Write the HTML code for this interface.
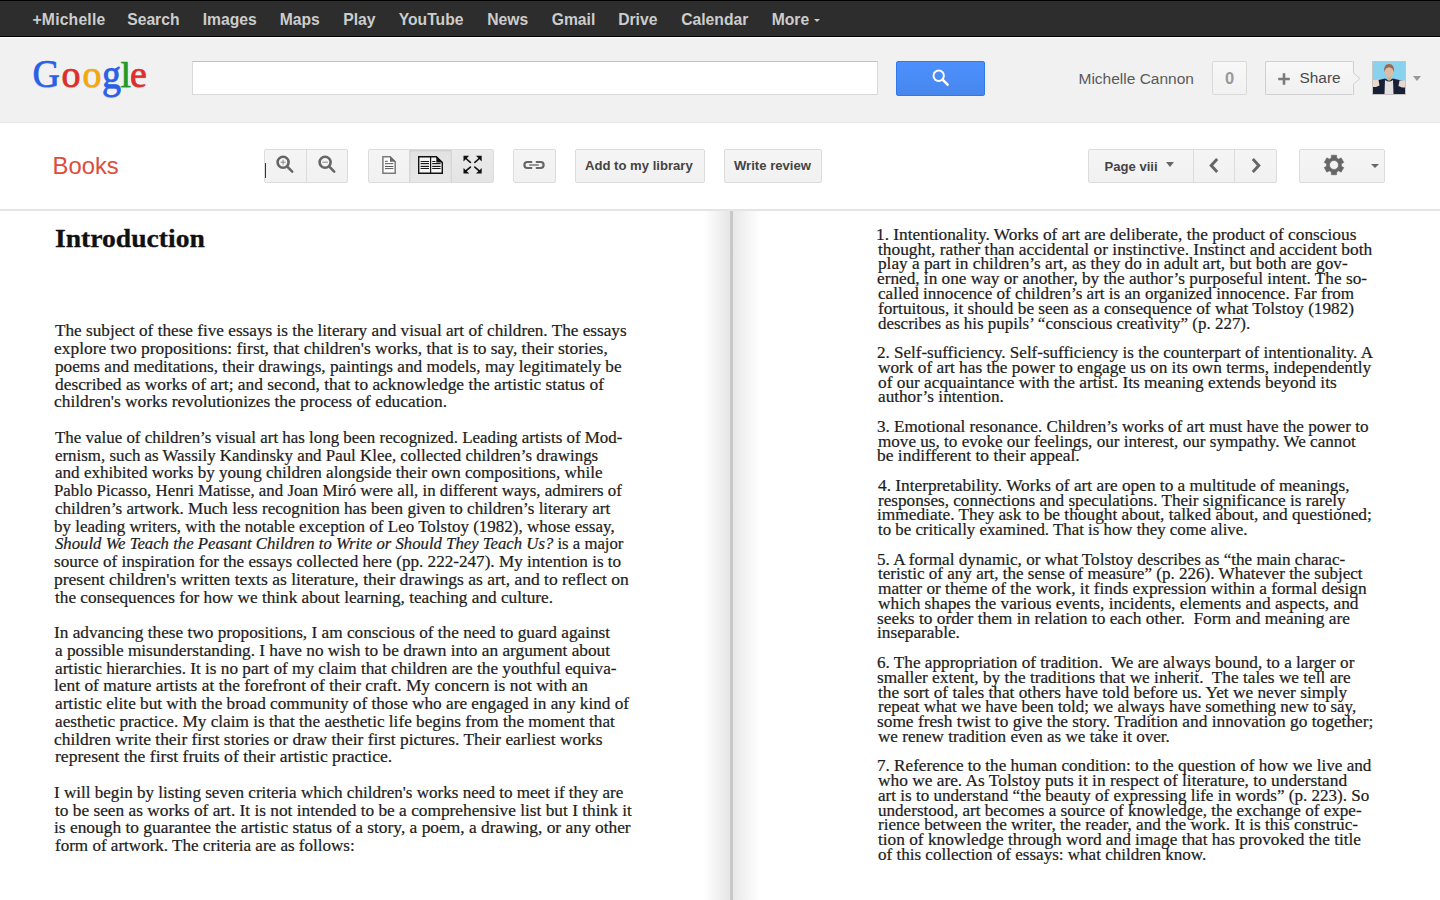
<!DOCTYPE html>
<html><head><meta charset="utf-8">
<style>
*{box-sizing:border-box}
html,body{margin:0;padding:0;width:1440px;height:900px;overflow:hidden;background:#fff;font-family:"Liberation Sans",sans-serif}
.a{position:absolute}
#topbar{left:0;top:0;width:1440px;height:37px;background:linear-gradient(#303030 0,#303030 1px,#2d2d2d 1px,#2d2d2d 34px,#303030 34px);border-top:1px solid #000;border-bottom:1px solid #000}
#topbar .n{position:absolute;top:9.5px;font:bold 15.7px/18px "Liberation Sans",sans-serif;color:#ccc;white-space:nowrap}
#hdr{left:0;top:37px;width:1440px;height:86px;background:#f1f1f1;border-top:1px solid #fff;border-bottom:1px solid #e5e5e5}
#tb{left:0;top:123px;width:1440px;height:88px;background:#fff;border-bottom:2px solid #e4e4e4}
.btn{position:absolute;top:149px;height:34px;border:1px solid #dcdcdc;border-radius:2px;background:linear-gradient(#f5f5f5,#f1f1f1);}
.btxt{position:absolute;font:bold 13.1px/16px "Liberation Sans",sans-serif;color:#444;white-space:nowrap}
.seg{position:absolute;top:0;height:32px;border-left:1px solid #dcdcdc}
.bl{position:absolute;white-space:pre;font-family:"Liberation Serif",serif;line-height:1;color:#1c1c1c;-webkit-text-stroke:0.2px #1c1c1c;transform-origin:0 0}
</style></head><body>

<div id="topbar" class="a">
  <span class="n" style="left:32.5px;letter-spacing:0.2px">+Michelle</span>
  <span class="n" style="left:127.2px">Search</span>
  <span class="n" style="left:202.7px">Images</span>
  <span class="n" style="left:279.7px">Maps</span>
  <span class="n" style="left:343.2px">Play</span>
  <span class="n" style="left:398.7px">YouTube</span>
  <span class="n" style="left:487.2px">News</span>
  <span class="n" style="left:551.7px">Gmail</span>
  <span class="n" style="left:618.2px">Drive</span>
  <span class="n" style="left:681.2px">Calendar</span>
  <span class="n" style="left:771.7px">More</span>
  <div class="a" style="left:814px;top:18px;width:0;height:0;border-left:3px solid transparent;border-right:3px solid transparent;border-top:3px solid #ccc"></div>
</div>

<div id="hdr" class="a"></div>
<!-- Google logo -->
<div class="a" style="left:0;top:0;font:38px/1 'Liberation Serif',serif;white-space:nowrap;text-shadow:0 1px 1px rgba(0,0,0,.2)">
<span class="a" id="lg0" style="left:32.5px;top:54.5px;color:#2a5fe8;-webkit-text-stroke:0.6px #2a5fe8;transform:scaleY(1.045);transform-origin:0 33px">G</span>
<span class="a" id="lg1" style="left:61.5px;top:54.5px;color:#dd2e2c;-webkit-text-stroke:0.7px #dd2e2c">o</span>
<span class="a" id="lg2" style="left:82.5px;top:54.5px;color:#f3a90d;-webkit-text-stroke:0.7px #f3a90d">o</span>
<span class="a" id="lg3" style="left:102px;top:54.5px;color:#2a5fe8;-webkit-text-stroke:0.7px #2a5fe8;transform:scaleY(1.09);transform-origin:0 17px">g</span>
<span class="a" id="lg4" style="left:120.5px;top:54.5px;color:#1e9a2a;-webkit-text-stroke:0.7px #1e9a2a;transform:scaleY(0.955);transform-origin:0 33.5px">l</span>
<span class="a" id="lg5" style="left:130px;top:54.5px;color:#dd2e2c;-webkit-text-stroke:0.7px #dd2e2c">e</span>
</div>
<!-- search box -->
<div class="a" style="left:192px;top:61px;width:686px;height:34px;background:#fff;border:1px solid #d9d9d9;border-top-color:#c0c0c0"></div>
<div class="a" style="left:896px;top:61px;width:89px;height:35px;border:1px solid #3079ed;border-radius:2px;background:linear-gradient(#4d90fe,#4787ed)"></div>
<svg class="a" style="left:930px;top:67px" width="22" height="22" viewBox="0 0 22 22"><circle cx="8.7" cy="8.75" r="5.2" fill="none" stroke="#fff" stroke-width="2"/><path d="M12.6 12.6L17.6 17.6" stroke="#fff" stroke-width="2.6" stroke-linecap="round"/></svg>

<div class="a" style="left:1078.5px;top:70.8px;font:15.5px/16px 'Liberation Sans',sans-serif;color:#5a5a5a;white-space:nowrap">Michelle Cannon</div>
<div class="a" style="left:1212px;top:61px;width:35px;height:34px;border:1px solid #d9d9d9;border-radius:2px;background:linear-gradient(#f8f8f8,#f1f1f1);font:bold 16.5px/33px 'Liberation Sans',sans-serif;color:#999;text-align:center">0</div>
<div class="a" style="left:1265px;top:61px;width:89px;height:34px;border:1px solid #d0d0d0;border-right:none;border-radius:2px 0 0 2px;background:linear-gradient(#f8f8f8,#f0f0f0)"></div>
<svg class="a" style="left:1352px;top:61px" width="10" height="34" viewBox="0 0 10 34"><path d="M0 0.5H1.5V12L8 17.5L1.5 23V33.5H0Z" fill="#f3f3f3"/><path d="M1.5 0V12L8 17.5L1.5 23V34" fill="none" stroke="#d0d0d0" stroke-width="1"/></svg>
<svg class="a" style="left:1277px;top:72px" width="14" height="14" viewBox="0 0 14 14"><path d="M7 1.2V12.8M1.2 7H12.8" stroke="#7a7a7a" stroke-width="2.6"/></svg>
<div class="a" style="left:1299.5px;top:70.3px;font:15.4px/16px 'Liberation Sans',sans-serif;color:#4a4a4a;white-space:nowrap">Share</div>
<!-- avatar -->
<svg class="a" style="left:1372px;top:61px" width="34" height="34" viewBox="0 0 34 34">
  <rect x="0.5" y="0.5" width="33" height="33" fill="#88d2ee" stroke="#c4c4c4"/>
  <path d="M1 33V21Q4 19 9 18.5L13 17.5Q17 20 21 17.5L25 18.5Q30 19 33 21V33Z" fill="#172036"/>
  <path d="M12.5 33L13 19Q17 22 21 19L21.5 33Z" fill="#e4e2e0"/>
  <path d="M15 15H19V19Q17 20.5 15 19Z" fill="#cfae98"/>
  <ellipse cx="17" cy="10.5" rx="4.4" ry="6.3" fill="#dcbca8"/>
  <path d="M12.2 11Q11.5 3 17 3Q22.8 3 22 11.5Q21 6.5 17 6.2Q13.5 6.5 12.2 11Z" fill="#9c6846"/>
  <path d="M1 19H6.5L7.5 24.5L4 26H1Z" fill="#e8d8cc"/>
  <path d="M33 19.5H27.5L26.5 25L30 26.5H33Z" fill="#e8d8cc"/>
</svg>
<div class="a" style="left:1413px;top:76px;width:0;height:0;border-left:4px solid transparent;border-right:4px solid transparent;border-top:5px solid #999"></div>

<div id="tb" class="a"></div>
<div class="a" style="left:52.6px;top:152.6px;font:23.8px/26px 'Liberation Sans',sans-serif;color:#dd4b39;white-space:nowrap">Books</div>

<!-- zoom group -->
<div class="btn" style="left:264px;width:84px"><div class="seg" style="left:41px"></div></div>
<div class="a" style="left:265px;top:163px;width:1px;height:15px;background:#333"></div>
<svg class="a" style="left:274px;top:153px" width="22" height="22" viewBox="0 0 22 22"><circle cx="9.1" cy="9.2" r="5.5" fill="none" stroke="#666" stroke-width="2.6"/><path d="M6.6 9.2H11.6M9.1 6.7V11.7" stroke="#888" stroke-width="1"/><path d="M13.8 14.2L18.2 18.6" stroke="#666" stroke-width="2.6" stroke-linecap="round"/></svg>
<svg class="a" style="left:315.5px;top:153px" width="22" height="22" viewBox="0 0 22 22"><circle cx="9.1" cy="9.2" r="5.5" fill="none" stroke="#666" stroke-width="2.6"/><path d="M6.4 9.2H11.8" stroke="#888" stroke-width="1"/><path d="M13.8 14.2L18.2 18.6" stroke="#666" stroke-width="2.6" stroke-linecap="round"/></svg>

<!-- view group -->
<div class="btn" style="left:368px;width:126px;overflow:hidden">
  <div class="a" style="left:40px;top:0;width:42px;height:32px;background:linear-gradient(#e2e2e2,#e8e8e8);box-shadow:inset 0 1px 2px rgba(0,0,0,.1);border-left:1px solid #d6d6d6"></div>
  <div class="a" style="left:82px;top:0;width:42px;height:32px;background:linear-gradient(#eaeaea,#e4e4e4);border-left:1px solid #d6d6d6"></div>
</div>
<svg class="a" style="left:381px;top:155px" width="16" height="20" viewBox="0 0 16 20"><path d="M1.9 1.8H9L14.2 6.8V18.2H1.9Z" fill="#fff" stroke="#7a7a7a" stroke-width="1.5"/><path d="M9 1.1V6.8H14.9Z" fill="#6a6a6a"/><path d="M4 6.3H6.8M4 8.7H12.4M4 11.5H12.4M4 13.6H12.4" stroke="#555" stroke-width="1"/></svg>
<svg class="a" style="left:417px;top:155px" width="27" height="20" viewBox="0 0 27 20"><path d="M1.7 1.7H19.3L25.3 7.5V18.3H1.7Z" fill="#f4f4f4" stroke="#111" stroke-width="1.4"/><path d="M19.3 1V7.5H26Z" fill="#111"/><path d="M13.6 1.5V18.5" stroke="#111" stroke-width="1.2"/><path d="M3.6 10H12M15.2 10H23.6" stroke="#cfcfcf" stroke-width="2"/><path d="M3.6 6.5H12M3.6 8.5H12M3.6 11.5H12M3.6 13.5H12M15.2 6.5H18.4M15.2 8.5H23.6M15.2 11.5H23.6M15.2 13.5H23.6" stroke="#1a1a1a" stroke-width="1"/></svg>
<svg class="a" style="left:462px;top:154px" width="22" height="22" viewBox="0 0 22 22"><g fill="#111"><path d="M1.5 1.8H7.2L1.5 7.5Z"/><path d="M19.7 1.8H14L19.7 7.5Z"/><path d="M1.5 19.6H7.2L1.5 13.9Z"/><path d="M19.7 19.6H14L19.7 13.9Z"/></g><g stroke="#111" stroke-width="1.6" stroke-linecap="round" fill="none"><path d="M3.5 4Q6 6.5 8.4 8.3M17.7 4Q15.2 6.5 12.8 8.3M3.5 17.4Q6 15 8.4 13.1M17.7 17.4Q15.2 15 12.8 13.1"/></g></svg>

<!-- link -->
<div class="btn" style="left:513px;width:43px"></div>
<svg class="a" style="left:521px;top:158px" width="26" height="14" viewBox="0 0 26 14"><path d="M11.2 4H6.4A3 3 0 0 0 6.4 10H11.2M14.8 4H19.6A3 3 0 0 1 19.6 10H14.8" fill="none" stroke="#666" stroke-width="2.2"/><path d="M8.2 7H17.8" stroke="#777" stroke-width="1.5"/></svg>

<div class="btn" style="left:575px;width:130px"></div>
<div class="btxt" style="left:585px;top:157.6px">Add to my library</div>
<div class="btn" style="left:724px;width:98px"></div>
<div class="btxt" style="left:734px;top:157.6px">Write review</div>

<!-- page nav -->
<div class="btn" style="left:1088px;width:189px"><div class="seg" style="left:104px"></div><div class="seg" style="left:145px"></div></div>
<div class="btxt" style="left:1104.5px;top:158.8px">Page viii</div>
<div class="a" style="left:1166px;top:162px;width:0;height:0;border-left:4.5px solid transparent;border-right:4.5px solid transparent;border-top:5px solid #666"></div>
<svg class="a" style="left:1206px;top:156px" width="16" height="20" viewBox="0 0 16 20"><path d="M11.2 3L5.2 9.5L11.2 16" fill="none" stroke="#666" stroke-width="2.9"/></svg>
<svg class="a" style="left:1248px;top:156px" width="16" height="20" viewBox="0 0 16 20"><path d="M4.8 3L10.8 9.5L4.8 16" fill="none" stroke="#666" stroke-width="2.9"/></svg>

<!-- gear -->
<div class="btn" style="left:1299px;width:86px"></div>
<svg class="a" style="left:1322px;top:152.8px" width="24" height="24" viewBox="0 0 24 24" id="gear"><path d="M9.31 5.00 L9.39 2.24 L14.61 2.24 L14.69 5.00 L16.72 6.17 L19.14 4.86 L21.76 9.39 L19.41 10.83 L19.41 13.17 L21.76 14.61 L19.14 19.14 L16.72 17.83 L14.69 19.00 L14.61 21.76 L9.39 21.76 L9.31 19.00 L7.28 17.83 L4.86 19.14 L2.24 14.61 L4.59 13.17 L4.59 10.83 L2.24 9.39 L4.86 4.86 L7.28 6.17Z M16.5 12 A4.5 4.5 0 1 0 7.5 12 A4.5 4.5 0 1 0 16.5 12Z" fill="#666" stroke="#666" stroke-width="0.6" stroke-linejoin="round" fill-rule="evenodd"/></svg>
<div class="a" style="left:1370.5px;top:164px;width:0;height:0;border-left:4px solid transparent;border-right:4px solid transparent;border-top:4.5px solid #666"></div>

<!-- book -->
<div class="a" style="left:704px;top:211px;width:26px;height:689px;background:linear-gradient(90deg,rgba(232,232,232,0),#e6e6e6)"></div>
<div class="a" style="left:730px;top:211px;width:3px;height:689px;background:#c8c8c8"></div>
<div class="a" style="left:733px;top:211px;width:27px;height:689px;background:linear-gradient(90deg,#e8e8e8,rgba(232,232,232,0))"></div>

<div class="a" id="intro" style="left:55px;top:226.4px;font:bold 25.7px/1 'Liberation Serif',serif;color:#111;white-space:nowrap;transform-origin:0 0;transform:scaleX(1.075);-webkit-text-stroke:0.3px #111">Introduction</div>

<div class="bl" id="L0" data-w="571.5" style="left:55.00px;top:323.37px;font-size:16.2px;transform:scaleX(1.0620)">The subject of these five essays is the literary and visual art of children. The essays</div>
<div class="bl" id="L1" data-w="551.9" style="left:54.00px;top:341.12px;font-size:16.2px;transform:scaleX(1.0765)">explore two propositions: first, that children's works, that is to say, their stories,</div>
<div class="bl" id="L2" data-w="566.4" style="left:55.00px;top:358.87px;font-size:16.2px;transform:scaleX(1.0636)">poems and meditations, their drawings, paintings and models, may legitimately be</div>
<div class="bl" id="L3" data-w="548.9" style="left:55.00px;top:376.62px;font-size:16.2px;transform:scaleX(1.0731)">described as works of art; and second, that to acknowledge the artistic status of</div>
<div class="bl" id="L4" data-w="390.9" style="left:54.00px;top:394.37px;font-size:16.2px;transform:scaleX(1.0721)">children's works revolutionizes the process of education.</div>
<div class="bl" id="L6" data-w="567.4" style="left:55.00px;top:429.87px;font-size:16.2px;transform:scaleX(1.0448)">The value of children’s visual art has long been recognized. Leading artists of Mod-</div>
<div class="bl" id="L7" data-w="542.7" style="left:55.00px;top:447.62px;font-size:16.2px;transform:scaleX(1.0430)">ernism, such as Wassily Kandinsky and Paul Klee, collected children’s drawings</div>
<div class="bl" id="L8" data-w="546.8" style="left:55.00px;top:465.37px;font-size:16.2px;transform:scaleX(1.0543)">and exhibited works by young children alongside their own compositions, while</div>
<div class="bl" id="L9" data-w="566.4" style="left:54.00px;top:483.12px;font-size:16.2px;transform:scaleX(1.0403)">Pablo Picasso, Henri Matisse, and Joan Miró were all, in different ways, admirers of</div>
<div class="bl" id="L10" data-w="555.0" style="left:55.00px;top:500.87px;font-size:16.2px;transform:scaleX(1.0537)">children’s artwork. Much less recognition has been given to children’s literary art</div>
<div class="bl" id="L11" data-w="558.1" style="left:54.00px;top:518.62px;font-size:16.2px;transform:scaleX(1.0502)">by leading writers, with the notable exception of Leo Tolstoy (1982), whose essay,</div>
<div class="bl" id="L12" data-w="568.4" style="left:55.00px;top:536.37px;font-size:16.2px;transform:scaleX(1.0331)"><i>Should We Teach the Peasant Children to Write or Should They Teach Us?</i> is a major</div>
<div class="bl" id="L13" data-w="565.7" style="left:54.00px;top:554.12px;font-size:16.2px;transform:scaleX(1.0575)">source of inspiration for the essays collected here (pp. 222-247). My intention is to</div>
<div class="bl" id="L14" data-w="572.5" style="left:54.00px;top:571.87px;font-size:16.2px;transform:scaleX(1.0822)">present children's written texts as literature, their drawings as art, and to reflect on</div>
<div class="bl" id="L15" data-w="497.4" style="left:55.00px;top:589.62px;font-size:16.2px;transform:scaleX(1.0632)">the consequences for how we think about learning, teaching and culture.</div>
<div class="bl" id="L17" data-w="555.0" style="left:54.00px;top:625.12px;font-size:16.2px;transform:scaleX(1.0645)">In advancing these two propositions, I am conscious of the need to guard against</div>
<div class="bl" id="L18" data-w="555.0" style="left:55.00px;top:642.87px;font-size:16.2px;transform:scaleX(1.0667)">a possible misunderstanding. I have no wish to be drawn into an argument about</div>
<div class="bl" id="L19" data-w="560.8" style="left:55.00px;top:660.62px;font-size:16.2px;transform:scaleX(1.0633)">artistic hierarchies. It is no part of my claim that children are the youthful equiva-</div>
<div class="bl" id="L20" data-w="532.0" style="left:54.00px;top:678.37px;font-size:16.2px;transform:scaleX(1.0740)">lent of mature artists at the forefront of their craft. My concern is not with an</div>
<div class="bl" id="L21" data-w="573.5" style="left:55.00px;top:696.12px;font-size:16.2px;transform:scaleX(1.0633)">artistic elite but with the broad community of those who are engaged in any kind of</div>
<div class="bl" id="L22" data-w="559.5" style="left:55.00px;top:713.87px;font-size:16.2px;transform:scaleX(1.0626)">aesthetic practice. My claim is that the aesthetic life begins from the moment that</div>
<div class="bl" id="L23" data-w="546.8" style="left:54.00px;top:731.62px;font-size:16.2px;transform:scaleX(1.0736)">children write their first stories or draw their first pictures. Their earliest works</div>
<div class="bl" id="L24" data-w="335.8" style="left:55.00px;top:749.37px;font-size:16.2px;transform:scaleX(1.0872)">represent the first fruits of their artistic practice.</div>
<div class="bl" id="L26" data-w="567.4" style="left:54.00px;top:784.87px;font-size:16.2px;transform:scaleX(1.0541)">I will begin by listing seven criteria which children's works need to meet if they are</div>
<div class="bl" id="L27" data-w="576.5" style="left:55.00px;top:802.62px;font-size:16.2px;transform:scaleX(1.0691)">to be seen as works of art. It is not intended to be a comprehensive list but I think it</div>
<div class="bl" id="L28" data-w="575.5" style="left:54.00px;top:820.37px;font-size:16.2px;transform:scaleX(1.0738)">is enough to guarantee the artistic status of a story, a poem, a drawing, or any other</div>
<div class="bl" id="L29" data-w="298.5" style="left:55.00px;top:838.12px;font-size:16.2px;transform:scaleX(1.0529)">form of artwork. The criteria are as follows:</div>
<div class="bl" id="R0" data-w="478.2" style="left:876.00px;top:226.97px;font-size:16.2px;transform:scaleX(1.0697)">1. Intentionality. Works of art are deliberate, the product of conscious</div>
<div class="bl" id="R1" data-w="493.8" style="left:878.00px;top:241.73px;font-size:16.2px;transform:scaleX(1.0727)">thought, rather than accidental or instinctive. Instinct and accident both</div>
<div class="bl" id="R2" data-w="469.3" style="left:878.00px;top:256.49px;font-size:16.2px;transform:scaleX(1.0651)">play a part in children’s art, as they do in adult art, but both are gov-</div>
<div class="bl" id="R3" data-w="488.7" style="left:877.00px;top:271.25px;font-size:16.2px;transform:scaleX(1.0642)">erned, in one way or another, by the author’s purposeful intent. The so-</div>
<div class="bl" id="R4" data-w="475.3" style="left:878.00px;top:286.01px;font-size:16.2px;transform:scaleX(1.0548)">called innocence of children’s art is an organized innocence. Far from</div>
<div class="bl" id="R5" data-w="475.3" style="left:878.00px;top:300.77px;font-size:16.2px;transform:scaleX(1.0645)">fortuitous, it should be seen as a consequence of what Tolstoy (1982)</div>
<div class="bl" id="R6" data-w="370.9" style="left:878.00px;top:315.53px;font-size:16.2px;transform:scaleX(1.0478)">describes as his pupils’ “conscious creativity” (p. 227).</div>
<div class="bl" id="R8" data-w="493.1" style="left:877.00px;top:345.05px;font-size:16.2px;transform:scaleX(1.0518)">2. Self-sufficiency. Self-sufficiency is the counterpart of intentionality. A</div>
<div class="bl" id="R9" data-w="493.1" style="left:878.00px;top:359.81px;font-size:16.2px;transform:scaleX(1.0672)">work of art has the power to engage us on its own terms, independently</div>
<div class="bl" id="R10" data-w="458.2" style="left:878.00px;top:374.57px;font-size:16.2px;transform:scaleX(1.0684)">of our acquaintance with the artist. Its meaning extends beyond its</div>
<div class="bl" id="R11" data-w="125.3" style="left:878.00px;top:389.33px;font-size:16.2px;transform:scaleX(1.0625)">author’s intention.</div>
<div class="bl" id="R13" data-w="490.0" style="left:877.00px;top:418.85px;font-size:16.2px;transform:scaleX(1.0562)">3. Emotional resonance. Children’s works of art must have the power to</div>
<div class="bl" id="R14" data-w="477.3" style="left:878.00px;top:433.61px;font-size:16.2px;transform:scaleX(1.0573)">move us, to evoke our feelings, our interest, our sympathy. We cannot</div>
<div class="bl" id="R15" data-w="200.9" style="left:877.00px;top:448.37px;font-size:16.2px;transform:scaleX(1.0780)">be indifferent to their appeal.</div>
<div class="bl" id="R17" data-w="470.4" style="left:878.00px;top:477.89px;font-size:16.2px;transform:scaleX(1.0680)">4. Interpretability. Works of art are open to a multitude of meanings,</div>
<div class="bl" id="R18" data-w="467.8" style="left:878.00px;top:492.65px;font-size:16.2px;transform:scaleX(1.0591)">responses, connections and speculations. Their significance is rarely</div>
<div class="bl" id="R19" data-w="492.6" style="left:877.00px;top:507.41px;font-size:16.2px;transform:scaleX(1.0704)">immediate. They ask to be thought about, talked about, and questioned;</div>
<div class="bl" id="R20" data-w="368.7" style="left:878.00px;top:522.17px;font-size:16.2px;transform:scaleX(1.0399)">to be critically examined. That is how they come alive.</div>
<div class="bl" id="R22" data-w="467.0" style="left:877.00px;top:551.69px;font-size:16.2px;transform:scaleX(1.0565)">5. A formal dynamic, or what Tolstoy describes as “the main charac-</div>
<div class="bl" id="R23" data-w="484.4" style="left:878.00px;top:566.45px;font-size:16.2px;transform:scaleX(1.0546)">teristic of any art, the sense of measure” (p. 226). Whatever the subject</div>
<div class="bl" id="R24" data-w="488.2" style="left:878.00px;top:581.21px;font-size:16.2px;transform:scaleX(1.0666)">matter or theme of the work, it finds expression within a formal design</div>
<div class="bl" id="R25" data-w="479.3" style="left:878.00px;top:595.97px;font-size:16.2px;transform:scaleX(1.0689)">which shapes the various events, incidents, elements and aspects, and</div>
<div class="bl" id="R26" data-w="471.6" style="left:877.00px;top:610.73px;font-size:16.2px;transform:scaleX(1.0716)">seeks to order them in relation to each other.  Form and meaning are</div>
<div class="bl" id="R27" data-w="80.9" style="left:877.00px;top:625.49px;font-size:16.2px;transform:scaleX(1.0662)">inseparable.</div>
<div class="bl" id="R29" data-w="476.6" style="left:877.00px;top:655.01px;font-size:16.2px;transform:scaleX(1.0608)">6. The appropriation of tradition.  We are always bound, to a larger or</div>
<div class="bl" id="R30" data-w="472.2" style="left:877.00px;top:669.77px;font-size:16.2px;transform:scaleX(1.0664)">smaller extent, by the traditions that we inherit.  The tales we tell are</div>
<div class="bl" id="R31" data-w="469.7" style="left:878.00px;top:684.53px;font-size:16.2px;transform:scaleX(1.0684)">the sort of tales that others have told before us. Yet we never simply</div>
<div class="bl" id="R32" data-w="477.0" style="left:878.00px;top:699.29px;font-size:16.2px;transform:scaleX(1.0506)">repeat what we have been told; we always have something new to say,</div>
<div class="bl" id="R33" data-w="494.2" style="left:877.00px;top:714.05px;font-size:16.2px;transform:scaleX(1.0700)">some fresh twist to give the story. Tradition and innovation go together;</div>
<div class="bl" id="R34" data-w="290.4" style="left:878.00px;top:728.81px;font-size:16.2px;transform:scaleX(1.0559)">we renew tradition even as we take it over.</div>
<div class="bl" id="R36" data-w="492.9" style="left:877.00px;top:758.33px;font-size:16.2px;transform:scaleX(1.0575)">7. Reference to the human condition: to the question of how we live and</div>
<div class="bl" id="R37" data-w="469.2" style="left:878.00px;top:773.09px;font-size:16.2px;transform:scaleX(1.0704)">who we are. As Tolstoy puts it in respect of literature, to understand</div>
<div class="bl" id="R38" data-w="491.0" style="left:878.00px;top:787.85px;font-size:16.2px;transform:scaleX(1.0540)">art is to understand “the beauty of expressing life in words” (p. 223). So</div>
<div class="bl" id="R39" data-w="483.2" style="left:878.00px;top:802.61px;font-size:16.2px;transform:scaleX(1.0549)">understood, art becomes a source of knowledge, the exchange of expe-</div>
<div class="bl" id="R40" data-w="479.5" style="left:878.00px;top:817.37px;font-size:16.2px;transform:scaleX(1.0614)">rience between the writer, the reader, and the work. It is this construc-</div>
<div class="bl" id="R41" data-w="482.4" style="left:878.00px;top:832.13px;font-size:16.2px;transform:scaleX(1.0670)">tion of knowledge through word and image that has provoked the title</div>
<div class="bl" id="R42" data-w="327.0" style="left:878.00px;top:846.89px;font-size:16.2px;transform:scaleX(1.0528)">of this collection of essays: what children know.</div>

</body></html>
